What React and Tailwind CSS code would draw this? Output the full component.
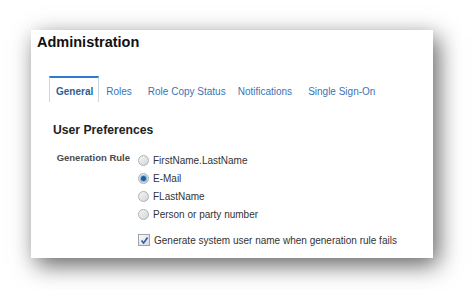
import React, { useState } from 'react';

const tabs = [
  { label: 'General', cls: '' },
  { label: 'Roles', cls: '' },
  { label: 'Role Copy Status', cls: 'ml-[2px]' },
  { label: 'Notifications', cls: 'ml-[-2px]' },
  { label: 'Single Sign-On', cls: 'ml-[2px]' },
];
const rules = ['FirstName.LastName', 'E-Mail', 'FLastName', 'Person or party number'];

function Radio({ checked }) {
  return (
    <span className="relative flex h-[11px] w-[11px] items-center justify-center rounded-full border border-[#aeb3b8] bg-gradient-to-br from-[#f4f4f4] to-[#d4d6d8]">
      {checked && <span className="h-[5px] w-[5px] rounded-full bg-[#1d5f9e] shadow-[0_0_1px_1px_rgba(60,140,200,0.6)]"></span>}
    </span>
  );
}

function Checkbox({ checked }) {
  return (
    <span className="flex h-[12px] w-[12px] items-center justify-center border border-[#9ba3ab] bg-gradient-to-br from-[#fafafa] to-[#d8dade]">
      {checked && (
        <svg width="9" height="9" viewBox="0 0 9 9">
          <path d="M1.5 4.5 L3.6 7 L7.6 1.5" fill="none" stroke="#2c5aa0" strokeWidth="1.6" />
        </svg>
      )}
    </span>
  );
}

export default function App() {
  const [rule, setRule] = useState(1);
  const [active, setActive] = useState(0);

  return (
    <div className="h-[290px] w-[475px] bg-white pl-[31px] pt-[30px]" style={{ fontFamily: '"Liberation Sans", Arial, sans-serif' }}>
      <div className="h-[228px] w-[402px] bg-white shadow-[5px_7px_22px_rgba(0,0,0,0.62)]">
        <h1 className="pl-[6px] pt-[4px] text-[14.5px] font-bold leading-[17px] text-[#111]">Administration</h1>

        <div className="ml-[18px] mt-[25px] flex h-[26px]">
          {tabs.map((t, i) => (
            <button
              key={t.label}
              onClick={() => setActive(i)}
              className={
                i === active
                  ? 'border-x border-t-2 border-x-[#cbd6e2] border-t-[#2f7bd0] pl-[6px] pr-[5px] pt-[4px] text-[10px] font-bold leading-[12px] text-[#2e5e93] ' + t.cls
                  : 'px-[7px] pt-[6px] text-[10px] leading-[12px] text-[#3b73b5] ' + t.cls
              }
            >
              {t.label}
            </button>
          ))}
        </div>

        <h2 className="ml-[22px] mt-[21px] text-[12.2px] font-bold leading-[14px] text-[#222]">User Preferences</h2>

        <div className="mt-[14px] flex">
          <div className="w-[99px] pt-[1px] text-right text-[9.5px] font-bold leading-[12px] text-[#4a4a4a]">Generation Rule</div>
          <div className="ml-[8px] flex flex-col">
            {rules.map((r, i) => (
              <label key={r} onClick={() => setRule(i)} className="flex h-[18px] items-center gap-[4px] text-[10px] text-[#333]">
                <Radio checked={rule === i} />
                <span>{r}</span>
              </label>
            ))}
            <label className="mt-[8px] flex h-[18px] items-center gap-[4px] text-[10px] text-[#333]">
              <Checkbox checked />
              <span>Generate system user name when generation rule fails</span>
            </label>
          </div>
        </div>
      </div>
    </div>
  );
}
